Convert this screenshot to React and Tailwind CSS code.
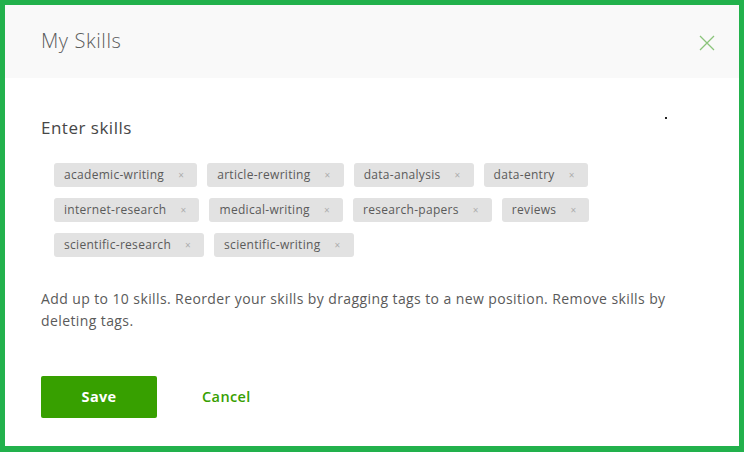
import React from "react";

const tags = [
  "academic-writing",
  "article-rewriting",
  "data-analysis",
  "data-entry",
  "internet-research",
  "medical-writing",
  "research-papers",
  "reviews",
  "scientific-research",
  "scientific-writing",
];

function Tag({ label }) {
  return (
    <div className="flex h-[24px] items-center rounded-[3px] bg-[#e2e2e2] pl-[10px] pr-[13px] text-[12px] tracking-[0.3px] text-[#5a5a5a]">
      <span>{label}</span>
      <span className="ml-[14px] text-[10px] leading-none text-[#adadad]">×</span>
    </div>
  );
}

export default function App() {
  return (
    <div
      className="relative flex h-[452px] w-[744px] flex-col border-t-[5px] border-r-[5px] border-b-[6px] border-l-[5px] border-[#22b14c] bg-white"
      style={{ fontFamily: '"Open Sans", "Liberation Sans", sans-serif' }}
    >
      <div className="flex h-[73px] shrink-0 items-center justify-between bg-[#f9f9f9] pl-[36px] pr-[24px]">
        <h1 className="mb-[2px] text-[20px] font-light tracking-[0.6px] text-[#5c5c5c]">My Skills</h1>
        <svg width="16" height="16" viewBox="0 0 16 16" className="mt-[2px]">
          <path d="M1 1 L15 15 M15 1 L1 15" stroke="#8ac47a" strokeWidth="1.3" fill="none" />
        </svg>
      </div>
      <div className="flex flex-1 flex-col pl-[36px] pr-[36px]">
        <h2 className="mt-[38px] text-[17px] font-medium leading-[24px] tracking-[0.5px] text-[#474747]">Enter skills</h2>
        <div className="mt-[23px] flex flex-wrap gap-x-[10px] gap-y-[11px] pl-[13px]">
          {tags.map((t) => (
            <Tag key={t} label={t} />
          ))}
        </div>
        <p className="mt-[31px] text-[14px] leading-[22px] tracking-[0.4px] text-[#5a5a5a]">
          Add up to 10 skills. Reorder your skills by dragging tags to a new position. Remove skills by deleting tags.
        </p>
        <div className="mt-[44px] flex items-center">
          <button className="flex h-[42px] w-[116px] items-center justify-center rounded-[2px] bg-[#37a000] text-[14.5px] font-bold tracking-[0.3px] text-white">
            Save
          </button>
          <button className="ml-[45px] text-[14.5px] font-semibold tracking-[0.4px] text-[#37a000]">Cancel</button>
        </div>
      </div>
      <div className="absolute left-[660px] top-[112px] h-[2px] w-[2px] bg-[#222]" />
    </div>
  );
}
